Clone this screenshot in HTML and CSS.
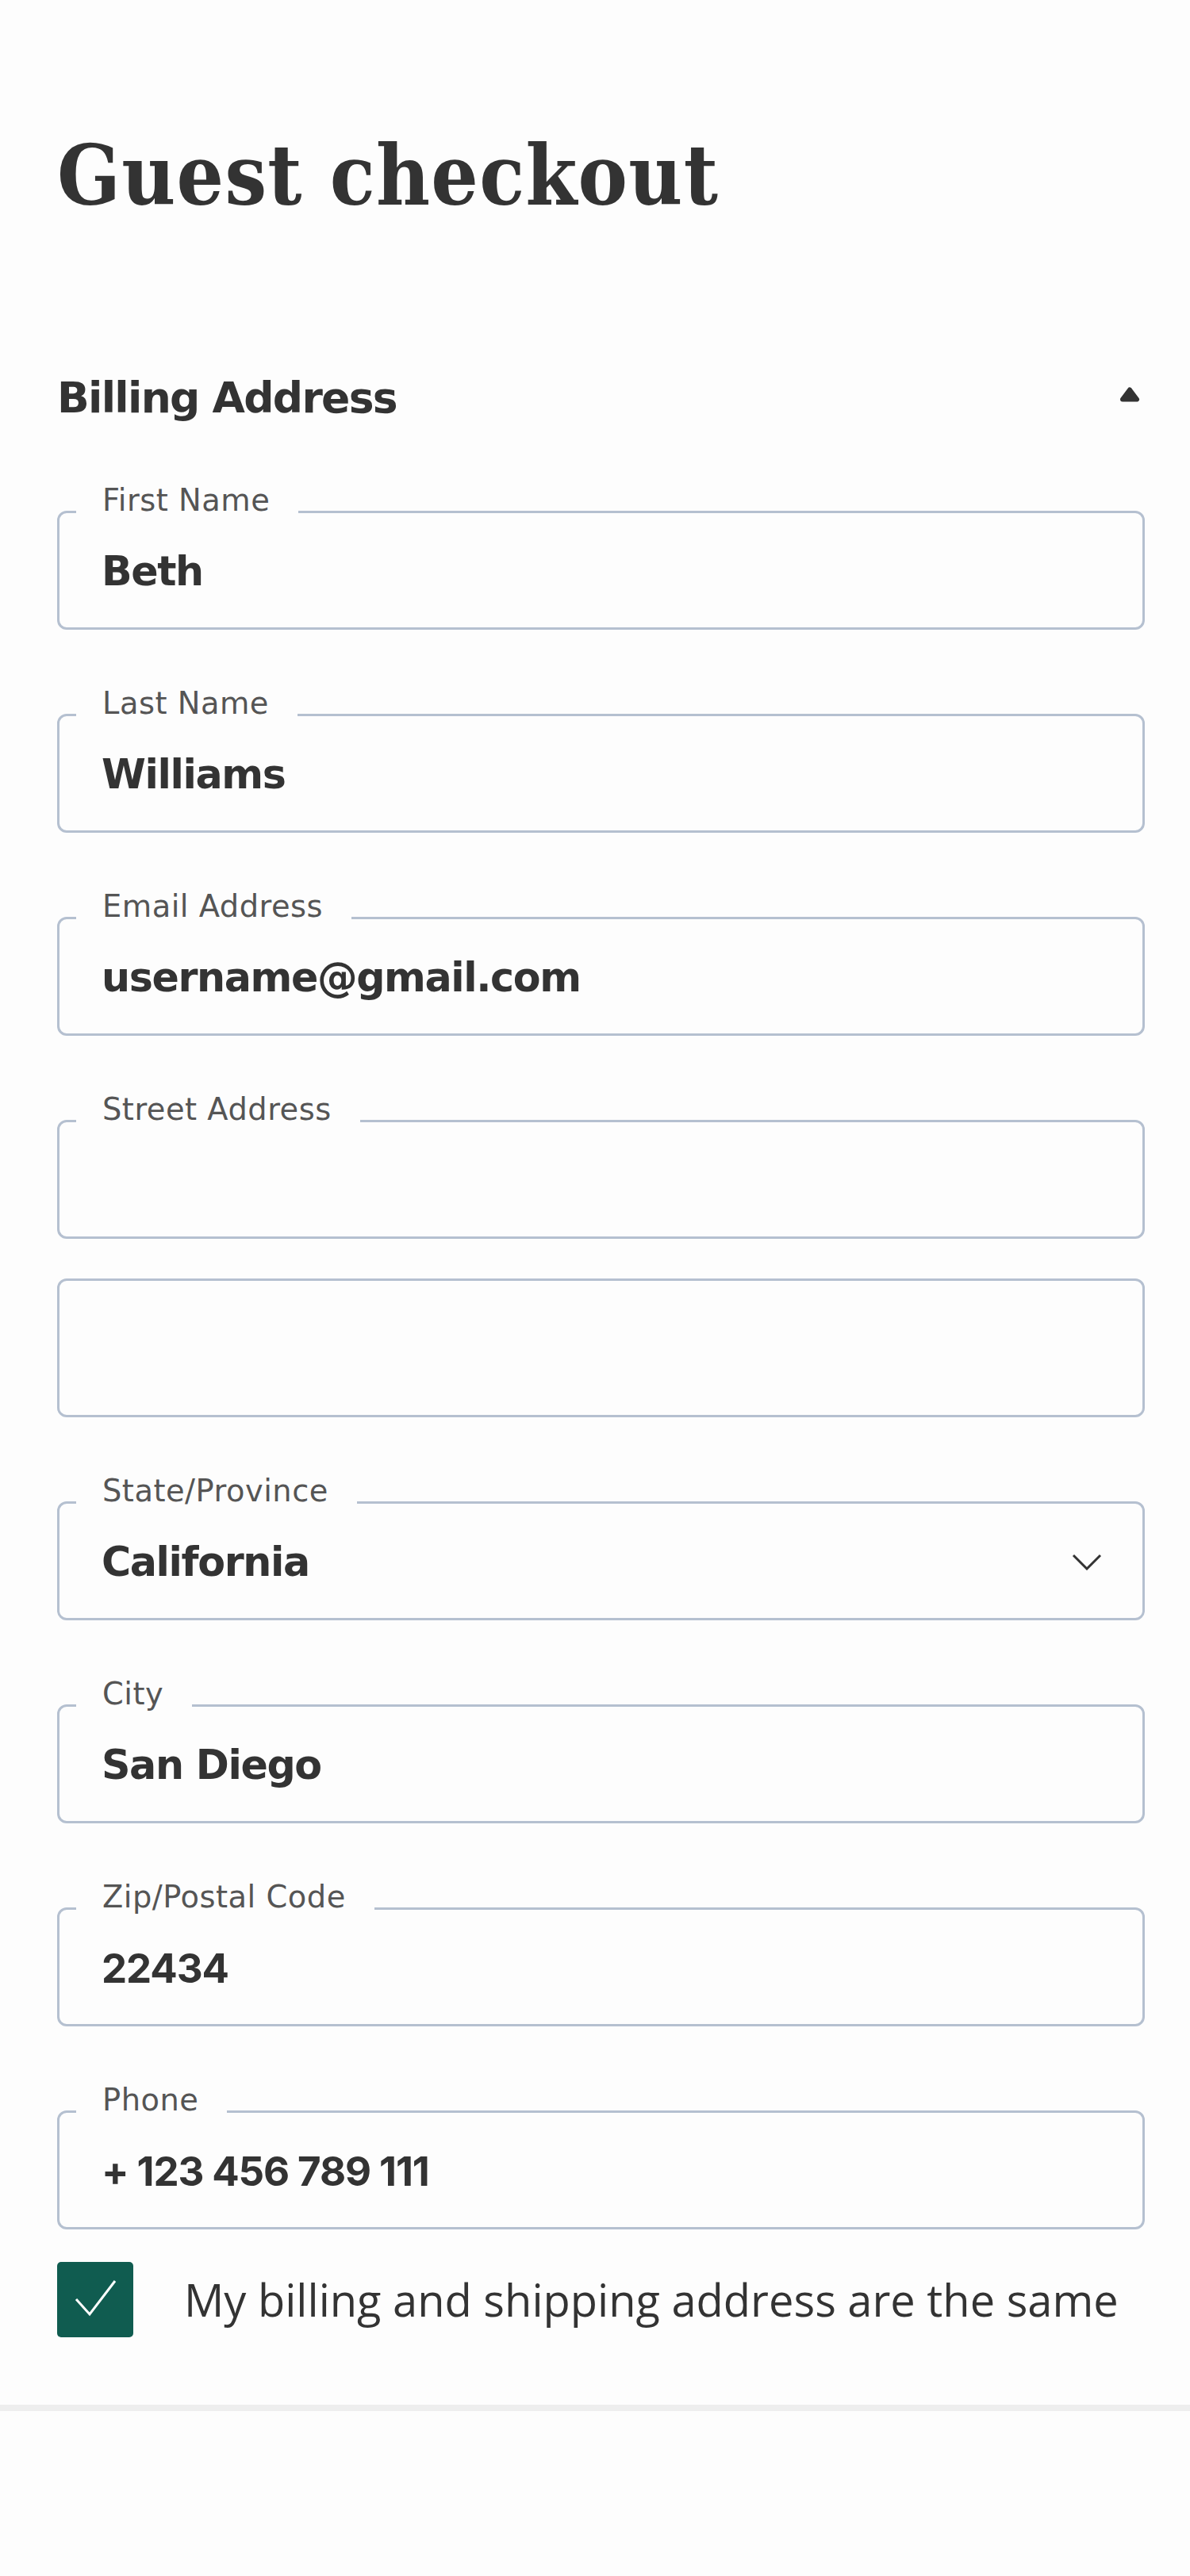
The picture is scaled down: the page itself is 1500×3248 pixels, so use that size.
FILE: index.html
```html
<!DOCTYPE html>
<html lang="en">
<head>
<meta charset="utf-8">
<title>Guest checkout</title>
<link rel="stylesheet" href="styles.css">
</head>
<body>
<main class="checkout">
  <div class="container">
    <h1 class="title">Guest checkout</h1>

    <section class="section">
      <header class="section-head">
        <h2 class="section-title">Billing Address</h2>
        <svg class="caret-up" width="26" height="19" viewBox="0 0 26 19" aria-hidden="true">
          <polygon points="4,15.5 13,3.5 22,15.5" fill="#333" stroke="#333" stroke-width="6" stroke-linejoin="round"/>
        </svg>
      </header>

      <div class="fields">
        <div class="field">
          <span class="field-label">First Name</span>
          <span class="field-value">Beth</span>
        </div>
        <div class="field">
          <span class="field-label">Last Name</span>
          <span class="field-value">Williams</span>
        </div>
        <div class="field">
          <span class="field-label">Email Address</span>
          <span class="field-value">username@gmail.com</span>
        </div>
        <div class="field">
          <span class="field-label">Street Address</span>
          <span class="field-value"></span>
        </div>
        <div class="field field--extra">
          <span class="field-value"></span>
        </div>
        <div class="field field--select">
          <span class="field-label">State/Province</span>
          <span class="field-value">California</span>
          <svg class="chevron" width="38" height="21" viewBox="0 0 38 21" aria-hidden="true">
            <polyline points="2,2 19,19 36,2" fill="none" stroke="#333" stroke-width="3"/>
          </svg>
        </div>
        <div class="field">
          <span class="field-label">City</span>
          <span class="field-value">San Diego</span>
        </div>
        <div class="field">
          <span class="field-label">Zip/Postal Code</span>
          <span class="field-value field-value--num">22434</span>
        </div>
        <div class="field">
          <span class="field-label">Phone</span>
          <span class="field-value field-value--num">+ 123 456 789 111</span>
        </div>
      </div>

      <label class="check-row">
        <span class="checkbox">
          <svg width="96" height="95" viewBox="0 0 96 95" aria-hidden="true">
            <polyline points="24,47 41,66 73,24" fill="none" stroke="#fff" stroke-width="3"/>
          </svg>
        </span>
        <span class="check-text">My billing and shipping address are the same</span>
      </label>
    </section>
  </div>

  <div class="divider"></div>

  <div class="container">
    <section class="section section--next">
      <header class="section-head">
        <h2 class="section-title">Shipping Address</h2>
      </header>
    </section>
  </div>
</main>
</body>
</html>
```

FILE: styles.css
```css
html, body {
  margin: 0;
  padding: 0;
  background: #fdfdfd;
}

body {
  color: #333333;
  font-family: "DejaVu Sans", "Noto Sans", sans-serif;
}

.container {
  padding: 160px 57px 0 72px;
}

.title {
  margin: 0;
  font-family: "DejaVu Serif Condensed", "DejaVu Serif", serif;
  font-stretch: condensed;
  font-weight: 700;
  font-size: 104px;
  line-height: 124px;
  letter-spacing: 1.3px;
  color: #333333;
}

.section {
  margin-top: 186px;
}

.section-head {
  display: flex;
  align-items: center;
  justify-content: space-between;
  height: 64px;
}

.section-title {
  margin: 0;
  font-family: "DejaVu Sans", sans-serif;
  font-weight: 700;
  font-size: 53.5px;
  line-height: 64px;
  letter-spacing: -1.7px;
  color: #333333;
}

.caret-up {
  margin-right: 6px;
  margin-bottom: 9px;
}

.fields {
  display: flex;
  flex-direction: column;
  padding-top: 4px;
}

.field {
  position: relative;
  box-sizing: border-box;
  height: 150px;
  margin-top: 106px;
  border: 3px solid #b5c0d0;
  border-radius: 12px;
  display: flex;
  align-items: center;
  padding: 3px 51px 0 53px;
}

.field--extra {
  height: 175px;
  margin-top: 50px;
}

.field-label {
  position: absolute;
  top: -36px;
  left: 21px;
  padding: 0 36px 0 33px;
  background: #fdfdfd;
  font-family: "DejaVu Sans", sans-serif;
  font-size: 38.4px;
  line-height: 40px;
  letter-spacing: 0.5px;
  color: #555555;
  white-space: nowrap;
}

.field-value {
  flex: 1;
  font-family: "DejaVu Sans", sans-serif;
  font-weight: 700;
  font-size: 50.7px;
  line-height: 60px;
  letter-spacing: -1.4px;
  color: #333333;
}

.field-value--num {
  font-family: "Inter", "DejaVu Sans", sans-serif;
  font-size: 51px;
  letter-spacing: -1.1px;
}

.chevron {
  flex: none;
}

.check-row {
  display: flex;
  align-items: center;
  gap: 64px;
  margin-top: 41px;
}

.checkbox {
  flex: none;
  width: 96px;
  height: 95px;
  border-radius: 5px;
  background: #105c50;
  display: flex;
}

.check-text {
  font-family: "Open Sans", sans-serif;
  font-size: 56px;
  line-height: 76px;
  color: #333333;
  padding-bottom: 2px;
}

.divider {
  height: 8px;
  margin-top: 85px;
  background: #eeeeee;
}

.section--next {
  margin-top: 0;
}

.container:last-child {
  padding-top: 199px;
}
```
